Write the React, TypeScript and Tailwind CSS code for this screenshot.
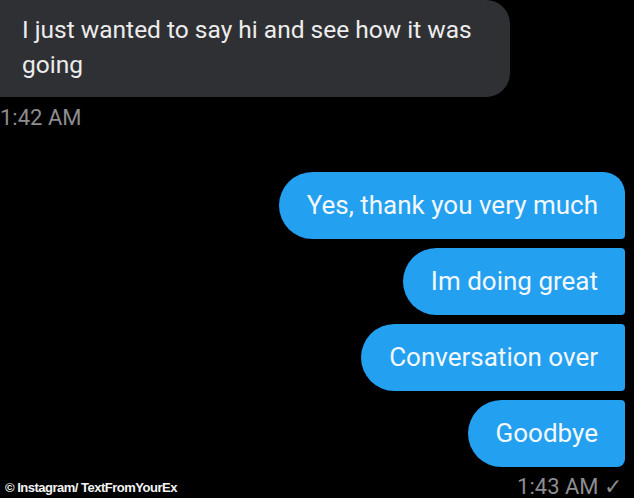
const incoming = "I just wanted to say hi and see how it was going";

const outgoing = [
  { text: "Yes, thank you very much", corner: "rounded-tr-[22px] rounded-br-[4px]" },
  { text: "Im doing great", corner: "rounded-r-[4px]" },
  { text: "Conversation over", corner: "rounded-r-[4px]" },
  { text: "Goodbye", corner: "rounded-tr-[4px] rounded-br-[8px]" },
];

export default function App() {
  return (
    <div className="relative h-[498px] w-[634px] overflow-hidden bg-black font-['Roboto',sans-serif]">
      <div className="-ml-[20px] w-[530px] rounded-r-[24px] bg-[#2f3034] pl-[42px] pr-[8px] pt-[12px] pb-[15px] text-[24.5px] leading-[35px] text-[#ececec]">
        {incoming}
      </div>
      <p className="mt-[8px] text-[22px] leading-[26px] text-[#8d8d8f]">1:42 AM</p>

      <div className="mr-[9px] mt-[41px] flex flex-col items-end gap-[9px]">
        {outgoing.map((m) => (
          <div
            key={m.text}
            className={`flex h-[67px] items-center rounded-l-[34px] bg-[#24a0f0] pl-[28px] pr-[27px] text-[26px] text-[#f2f8fd] ${m.corner}`}
          >
            {m.text}
          </div>
        ))}
      </div>
      <p className="mr-[12px] mt-[10px] text-right text-[22px] leading-[20px] text-[#8d8d8f]">
        1:43 AM ✓
      </p>

      <span className="absolute bottom-[1px] left-[5px] font-['Liberation_Sans',sans-serif] text-[13px] font-bold tracking-[-0.5px] text-[#f4f4f4]">
        © Instagram/ TextFromYourEx
      </span>
    </div>
  );
}
